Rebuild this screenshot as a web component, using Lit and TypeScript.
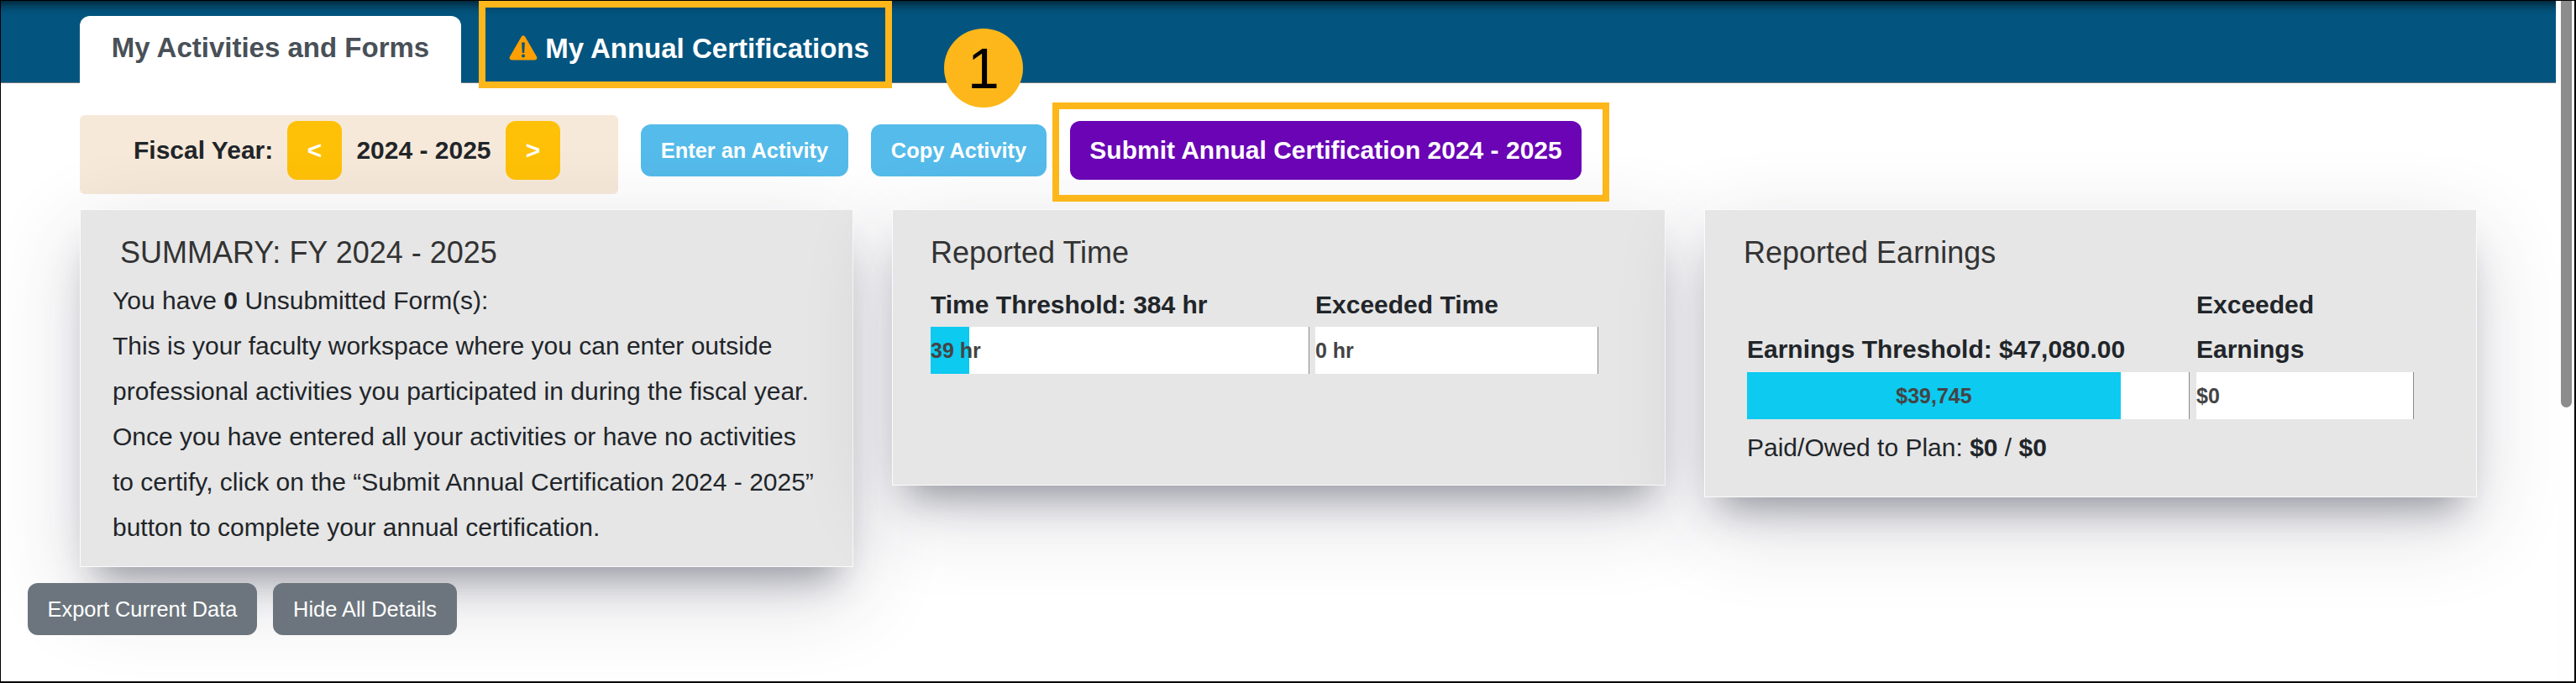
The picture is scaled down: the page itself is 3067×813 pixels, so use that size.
import { LitElement, html, css } from "lit";
import { customElement } from "lit/decorators.js";

@customElement("app-root")
export class AppRoot extends LitElement {
  static styles = css`
    :host {
      display: block;
      width: 3067px;
      height: 813px;
      overflow: hidden;
      font-family: "Liberation Sans", Arial, sans-serif;
      color: #212529;
    }
    * { box-sizing: border-box; }
    .frame {
      position: relative;
      display: flex;
      width: 3067px;
      height: 813px;
      border: solid #000;
      border-width: 1px 2px 2px 1px;
      background: #fff;
      overflow: hidden;
    }
    .main { flex: 1; min-width: 0; }
    .rail {
      flex: 0 0 20px;
      padding: 0 3px 0 4px;
      margin-left: 2px;
      background: #fefefe;
    }
    .thumb {
      height: 484px;
      background: #8c8c8c;
      border-radius: 0 0 7px 7px;
    }
    .nav {
      position: relative;
      display: flex;
      align-items: flex-end;
      height: 98px;
      padding-left: 94px;
      background: #03557f;
      border-bottom: 1px solid #6b7780;
      box-shadow: inset 0 16px 14px -13px rgba(0, 0, 0, 0.75);
    }
    .tab {
      display: flex;
      align-items: center;
      justify-content: center;
      font-size: 33px;
      font-weight: 700;
    }
    .tab.active {
      width: 454px;
      margin-bottom: -1px;
      height: 80px;
      padding-bottom: 4px;
      background: #fff;
      color: #495057;
      border-radius: 12px 12px 0 0;
    }
    .tab.alert {
      position: relative;
      width: 492px;
      margin-left: 21px;
      height: 97px;
      padding: 16px 0 0 9px;
      gap: 9px;
      color: #fff;
    }
    .tab.alert svg { width: 34px; height: 30px; flex: none; margin-top: -1px; }
    .ring {
      position: absolute;
      border: 8px solid #fdb71a;
      pointer-events: none;
    }
    .tab.alert .ring { inset: 0 0 -7px 0; }
    .step {
      position: absolute;
      left: 1123px;
      top: 33px;
      width: 94px;
      height: 94px;
      border-radius: 50%;
      background: #fdb71a;
      color: #000;
      font-size: 68px;
      display: flex;
      align-items: center;
      justify-content: center;
    }
    .toolbar {
      display: flex;
      align-items: flex-start;
      margin-top: 38px;
      padding-left: 94px;
    }
    .fiscal {
      display: flex;
      align-items: center;
      width: 641px;
      height: 94px;
      padding: 7px 0 17px 64px;
      background: #f7e9d9;
      border-radius: 6px;
      font-size: 30px;
      font-weight: 700;
    }
    .fiscal .label { width: 183px; }
    .fiscal .year { width: 195px; text-align: center; }
    .arrow {
      width: 65px;
      height: 70px;
      display: flex;
      align-items: center;
      justify-content: center;
      border-radius: 12px;
      background: #ffc107;
      color: #fff;
    }
    .actions {
      display: flex;
      align-items: center;
      height: 70px;
      margin-top: 7px;
      margin-left: 27px;
    }
    .btn {
      display: flex;
      align-items: center;
      justify-content: center;
      border-radius: 12px;
      color: #fff;
      white-space: nowrap;
    }
    .btn.light {
      height: 62px;
      background: #55bbea;
      font-size: 25.4px;
      font-weight: 700;
    }
    .btn.enter { width: 247px; }
    .btn.copy { width: 209px; margin-left: 27px; }
    .btn.submit {
      position: relative;
      width: 609px;
      height: 70px;
      margin-left: 28px;
      background: #6a04b5;
      font-size: 30px;
      font-weight: 700;
    }
    .btn.submit .ring { inset: -22px -33px -26px -21px; }
    .cards {
      display: grid;
      grid-template-columns: 921px 921px 920px;
      gap: 46px;
      align-items: start;
      margin-top: 18px;
      padding-left: 94px;
    }
    .card {
      background: #e6e6e6;
      border: 1px solid #fbfbfb;
      box-shadow: 0 32px 40px -20px rgba(50, 52, 70, 0.42),
        0 32px 96px rgba(40, 40, 70, 0.19);
    }
    .card h2 {
      margin: 0;
      font-size: 36px;
      font-weight: 400;
      line-height: 44px;
      color: #333;
    }
    .summary { padding: 29px 40px 19px 38px; }
    .summary h2 { padding-left: 9px; margin-bottom: 8px; }
    .summary p {
      margin: 0;
      font-size: 30px;
      line-height: 54px;
      white-space: nowrap;
    }
    .time { padding: 29px 0 132px 45px; }
    .earn { padding: 29px 0 31px 50px; }
    .time h2 { margin-bottom: 13px; }
    .earn h2 { margin-left: -4px; margin-bottom: 13px; }
    .grid { display: grid; align-items: end; }
    .time .grid { grid-template-columns: 451px 337px; column-gap: 7px; }
    .earn .grid { grid-template-columns: 527px 259px; column-gap: 8px; }
    .head {
      font-size: 30px;
      font-weight: 700;
      line-height: 53px;
      white-space: nowrap;
    }
    .earn .head.narrow { white-space: normal; }
    .earn .head { margin-bottom: 1px; }
    .bar {
      height: 56px;
      background: #fff;
      border-right: 1px solid #8a8a8a;
      display: flex;
    }
    .fill {
      display: flex;
      align-items: center;
      background: #0dcaf0;
    }
    .value {
      font-size: 25px;
      font-weight: 700;
      line-height: 56px;
      color: #444;
      white-space: nowrap;
    }
    .fill.center { justify-content: center; }
    .paid {
      margin: 7px 0 0;
      font-size: 30px;
      line-height: 54px;
    }
    .footer {
      display: flex;
      gap: 19px;
      margin-top: 19px;
      padding-left: 32px;
    }
    .btn.dark {
      height: 62px;
      background: #6c757d;
      font-size: 25.4px;
    }
    .btn.export { width: 273px; }
    .btn.hide { width: 219px; }
  `;

  render() {
    return html`
      <div class="frame">
        <div class="main">
          <div class="nav">
            <div class="tab active">My Activities and Forms</div>
            <div class="tab alert">
              <svg viewBox="0 0 34 30" aria-hidden="true">
                <path
                  d="M17 .5c-1 0-1.9.5-2.4 1.4L1 25.6c-1 1.8.3 3.9 2.4 3.9h27.2c2.1 0 3.4-2.1 2.4-3.9L19.4 1.9C18.9 1 18 .5 17 .5z"
                  fill="#ffa000"
                />
                <path d="M15.1 8.5h3.8l-.7 12.5h-2.4z" fill="#03557f" />
                <circle cx="17" cy="24.4" r="2" fill="#03557f" />
              </svg>
              My Annual Certifications
              <span class="ring"></span>
            </div>
          </div>
          <div class="toolbar">
            <div class="fiscal">
              <span class="label">Fiscal Year:</span>
              <span class="arrow">&lt;</span>
              <span class="year">2024 - 2025</span>
              <span class="arrow">&gt;</span>
            </div>
            <div class="actions">
              <div class="btn light enter">Enter an Activity</div>
              <div class="btn light copy">Copy Activity</div>
              <div class="btn submit">
                Submit Annual Certification 2024 - 2025
                <span class="ring"></span>
              </div>
            </div>
          </div>
          <div class="cards">
            <section class="card summary">
              <h2>SUMMARY: FY 2024 - 2025</h2>
              <p>You have <b>0</b> Unsubmitted Form(s):</p>
              <p>
                This is your faculty workspace where you can enter outside<br />
                professional activities you participated in during the fiscal year.<br />
                Once you have entered all your activities or have no activities<br />
                to certify, click on the “Submit Annual Certification 2024 - 2025”<br />
                button to complete your annual certification.
              </p>
            </section>
            <section class="card time">
              <h2>Reported Time</h2>
              <div class="grid">
                <div class="head">Time Threshold: 384 hr</div>
                <div class="head">Exceeded Time</div>
                <div class="bar">
                  <div class="fill" style="width: 46px">
                    <span class="value">39 hr</span>
                  </div>
                </div>
                <div class="bar"><span class="value">0 hr</span></div>
              </div>
            </section>
            <section class="card earn">
              <h2>Reported Earnings</h2>
              <div class="grid">
                <div class="head">Earnings Threshold: $47,080.00</div>
                <div class="head narrow">Exceeded Earnings</div>
                <div class="bar">
                  <div class="fill center" style="width: 445px">
                    <span class="value">$39,745</span>
                  </div>
                </div>
                <div class="bar"><span class="value">$0</span></div>
              </div>
              <p class="paid">Paid/Owed to Plan: <b>$0</b> / <b>$0</b></p>
            </section>
          </div>
          <div class="footer">
            <div class="btn dark export">Export Current Data</div>
            <div class="btn dark hide">Hide All Details</div>
          </div>
        </div>
        <div class="rail"><div class="thumb"></div></div>
        <div class="step">1</div>
      </div>
    `;
  }
}
